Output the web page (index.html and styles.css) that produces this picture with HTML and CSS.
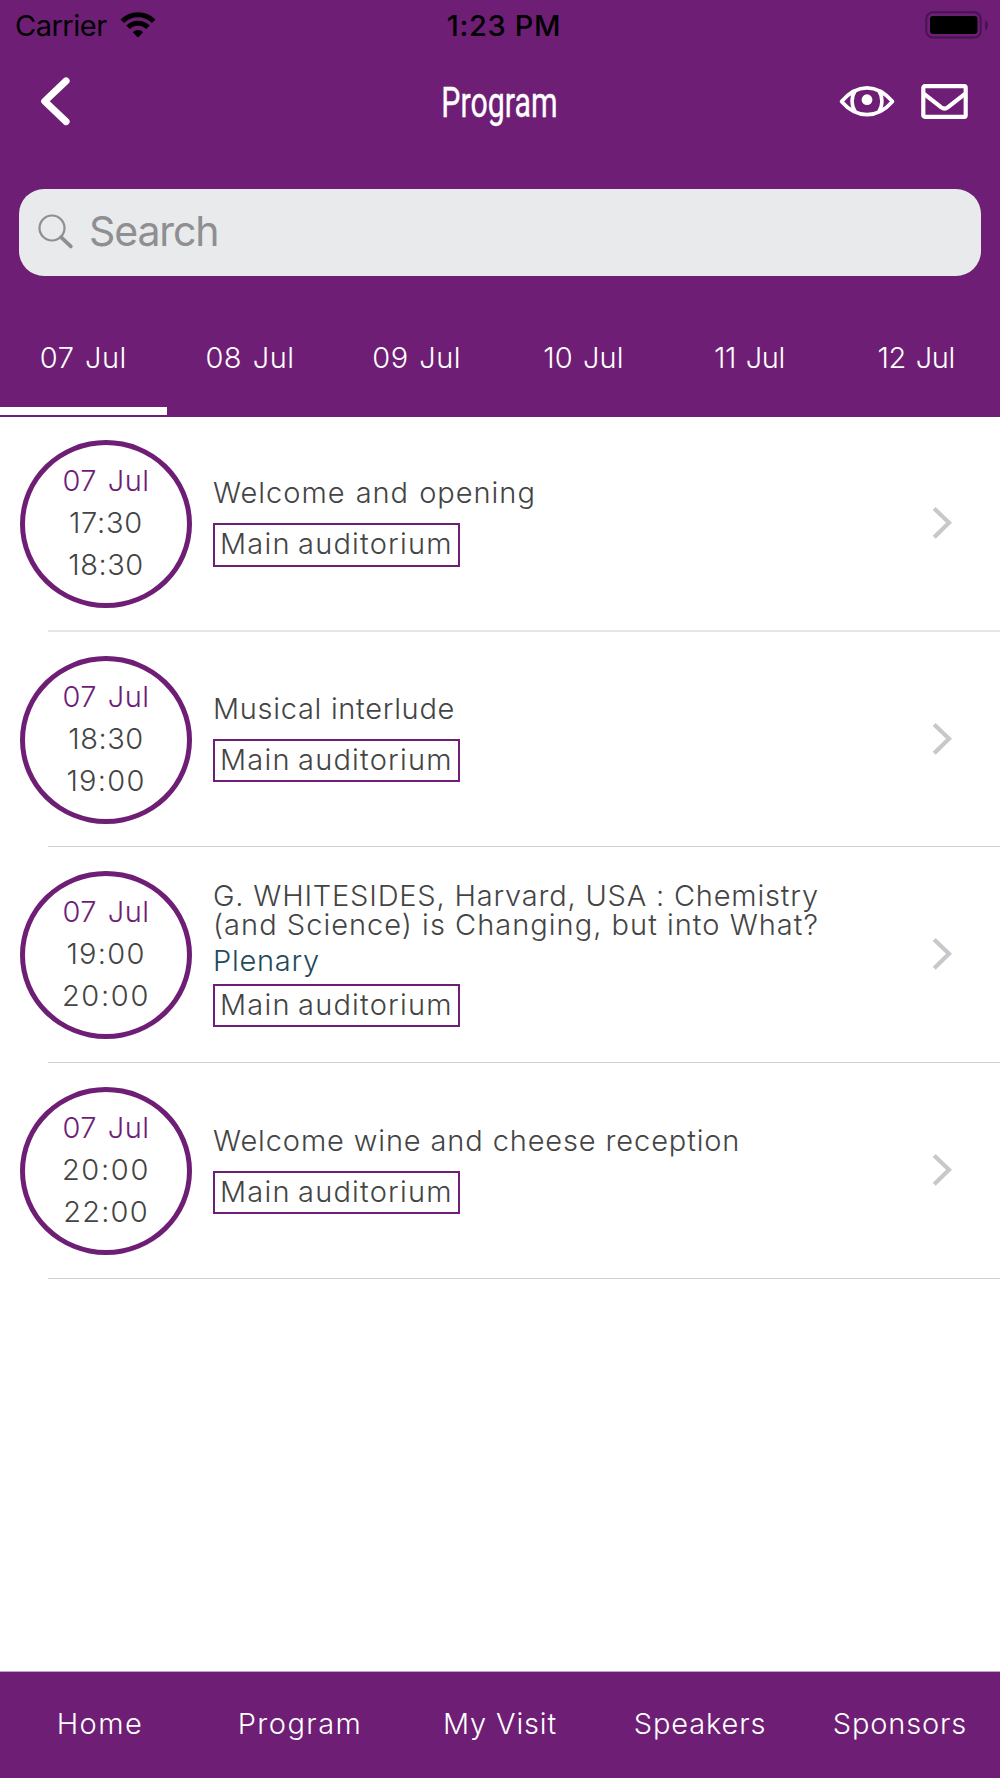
FILE: index.html
```html
<!DOCTYPE html>
<html lang="en">
<head>
<meta charset="utf-8">
<title>Program</title>
<link rel="stylesheet" href="styles.css">
</head>
<body>
<div class="app">
  <header class="header">
    <div class="status">
      <div class="status-left">
        <span class="carrier">Carrier</span>
        <svg class="wifi" width="36" height="26" viewBox="0 0 36 26">
          <g fill="none" stroke="#000" stroke-width="5">
            <path d="M2.3 9.3a22.2 22.2 0 0 1 31.4 0"/>
            <path d="M8 15.3a14.2 14.2 0 0 1 20 0"/>
          </g>
          <path d="M18 25.5l-5.2-5.3a7.4 7.4 0 0 1 10.4 0z"/>
        </svg>
      </div>
      <span class="clock">1:23 PM</span>
      <svg class="battery" width="64" height="28" viewBox="0 0 64 28">
        <rect x="1.3" y="1.3" width="54.4" height="25.2" rx="6.5" fill="none" stroke="#471350" stroke-width="2"/>
        <rect x="5" y="5" width="47.5" height="18" rx="3.2"/>
        <path d="M60 9.2c4 1.6 4 8.4 0 10z" fill="#471350"/>
      </svg>
    </div>
    <div class="navbar">
      <svg class="back" width="32" height="50" viewBox="0 0 32 50"><path d="M27.1 4.9L5.7 25.2 27.1 45.6" fill="none" stroke="#fff" stroke-width="7" stroke-linecap="round" stroke-linejoin="round"/></svg>
      <h1 class="title">Program</h1>
      <div class="actions">
        <svg width="58" height="32" viewBox="0 0 58 32" fill="none" stroke="#fff" stroke-width="3.6" stroke-linejoin="round">
          <path d="M3.5 16.5C10 9 19 2.9 29 2.9s19 6.1 25.5 13.6C48 24 39 29.6 29 29.6S10 24 3.5 16.5z"/>
          <path d="M17.3 5.5c-4.3 6.5-4.3 15 0 21.5M40.7 5.5c4.3 6.5 4.3 15 0 21.5"/>
          <circle cx="29" cy="14.7" r="5.4" fill="#fff" stroke="none"/>
        </svg>
        <svg width="47" height="35" viewBox="0 0 47 35" fill="none" stroke="#fff" stroke-width="4.2" stroke-linejoin="round">
          <rect x="2.3" y="2.2" width="42.4" height="30.6" rx="1.5"/>
          <path d="M3 9.8L20.3 23.4Q23.5 25.8 26.7 23.4L44 9.8"/>
        </svg>
      </div>
    </div>
    <div class="search">
      <svg width="36" height="36" viewBox="0 0 36 36" fill="none" stroke="#8e8e93">
        <circle cx="14" cy="14" r="12.5" stroke-width="2.2"/>
        <path d="M23 23.2L32.8 32.4" stroke-width="3.8" stroke-linecap="round"/>
      </svg>
      <span class="search-text">Search</span>
    </div>
    <nav class="tabs">
      <span class="tab tab-active">07 Jul</span>
      <span class="tab">08 Jul</span>
      <span class="tab">09 Jul</span>
      <span class="tab">10 Jul</span>
      <span class="tab">11 Jul</span>
      <span class="tab">12 Jul</span>
    </nav>
  </header>

  <main class="list">
    <article class="row">
      <div class="slot"><span class="date">07 Jul</span><span class="t1730">17:30</span><span class="t1830">18:30</span></div>
      <div class="info"><div class="name">Welcome and opening</div><div class="room">Main auditorium</div></div>
      <svg class="chevron" width="20" height="32" viewBox="0 0 20 32"><path d="M2.2 1.5L17 15.8 2.2 30.2"/></svg>
    </article>
    <article class="row">
      <div class="slot"><span class="date">07 Jul</span><span class="t1830">18:30</span><span class="t1900">19:00</span></div>
      <div class="info"><div class="name name-music">Musical interlude</div><div class="room">Main auditorium</div></div>
      <svg class="chevron" width="20" height="32" viewBox="0 0 20 32"><path d="M2.2 1.5L17 15.8 2.2 30.2"/></svg>
    </article>
    <article class="row">
      <div class="slot"><span class="date">07 Jul</span><span class="t1900">19:00</span><span class="t2000">20:00</span></div>
      <div class="info"><div class="name name-long"><span class="caps">G. WHITESIDES, Harvard, USA : Chemistry</span><br>(and Science) is Changing, but into What?</div><div class="kind">Plenary</div><div class="room">Main auditorium</div></div>
      <svg class="chevron" width="20" height="32" viewBox="0 0 20 32"><path d="M2.2 1.5L17 15.8 2.2 30.2"/></svg>
    </article>
    <article class="row">
      <div class="slot"><span class="date">07 Jul</span><span class="t2000">20:00</span><span class="t2200">22:00</span></div>
      <div class="info"><div class="name name-wine">Welcome wine and cheese reception</div><div class="room">Main auditorium</div></div>
      <svg class="chevron" width="20" height="32" viewBox="0 0 20 32"><path d="M2.2 1.5L17 15.8 2.2 30.2"/></svg>
    </article>
  </main>

  <footer class="bottom">
    <span>Home</span>
    <span>Program</span>
    <span>My Visit</span>
    <span>Speakers</span>
    <span>Sponsors</span>
  </footer>
</div>
</body>
</html>
```
FILE: styles.css
```css
* { box-sizing: border-box; }
body {
  margin: 0;
  background: #fff;
  color: #444;
  font: 300 29px/29px Inter, "Liberation Sans", sans-serif;
  white-space: nowrap;
}
svg { display: block; flex: none; }
.app { display: flex; flex-direction: column; width: 1000px; height: 1778px; overflow: hidden; }

.header { flex: none; height: 417px; background: #6e1e75; color: #fff; }
.status {
  display: grid;
  grid-template-columns: 1fr auto 1fr;
  align-items: center;
  height: 49px;
  padding: 0 11px 0 15px;
  color: #000;
}
.status-left { display: flex; align-items: center; gap: 13px; }
.carrier { padding-top: 2px; font-weight: 400; letter-spacing: -0.5px; }
.clock { padding: 2px 0 0 4px; font-weight: 500; letter-spacing: 0.7px; }
.battery { justify-self: end; }

.navbar {
  display: grid;
  grid-template-columns: 1fr auto 1fr;
  align-items: center;
  height: 104px;
  padding: 0 32px 0 39px;
}
.title {
  margin: 2px 0 0 -8px;
  font: 400 43px/50px Roboto, sans-serif;
  transform: scaleX(0.705);
  -webkit-text-stroke: 0.4px #fff;
}
.actions { display: flex; justify-content: flex-end; align-items: center; gap: 25px; }

.search {
  display: flex;
  align-items: center;
  gap: 15px;
  height: 87px;
  margin: 36px 19px 0;
  padding-left: 19px;
  border-radius: 25px;
  background: #e8eaeb;
  color: #8e8e93;
}
.search svg { margin-top: -2px; }
.search-text { padding-bottom: 2px; font-size: 41px; font-weight: 400; letter-spacing: -1.1px; }

.tabs { display: grid; grid-template-columns: repeat(6, 1fr); height: 140px; padding-bottom: 1px; }
.tab {
  padding-top: 67px;
  text-align: center;
  word-spacing: 2px;
  letter-spacing: 0.5px;
  border-bottom: 8px solid transparent;
}
.tab-active { border-color: #fff; }
.tab:nth-child(4) { letter-spacing: 0.1px; }
.tab:nth-child(n+5) { padding-right: 1px; letter-spacing: -0.4px; }

.list { flex: 1; display: grid; grid-template-rows: 215px 215px 216px 216px; align-content: start; }
.row {
  display: grid;
  grid-template-columns: 172px 700px 20px;
  column-gap: 20px;
  padding: 24px 0 0 20px;
  background: linear-gradient(#d0d0d2, #d0d0d2) 48px 100% / 100% 1px no-repeat;
}
.row:first-child { padding-top: 23px; background-image: linear-gradient(#e6e6e8, #e6e6e8); background-size: 100% 2px; }
.slot {
  display: flex;
  flex-direction: column;
  align-items: center;
  height: 168px;
  padding-top: 15px;
  border: 5px solid #6e1e75;
  border-radius: 50%;
  line-height: 42px;
}
.date { color: #6e1e75; word-spacing: 2px; letter-spacing: 0.5px; }
.t1730 { letter-spacing: 0.75px; }
.t1830 { letter-spacing: 0.55px; }
.t1900 { letter-spacing: 1.25px; }
.t2000 { letter-spacing: 1.7px; }
.t2200 { letter-spacing: 1.2px; }

.info { padding: 38px 0 0 1px; }
.name { letter-spacing: 0.98px; word-spacing: 1px; }
.name-music { letter-spacing: 0.7px; word-spacing: 0; }
.name-long { letter-spacing: 1.02px; word-spacing: 0; }
.caps { letter-spacing: 0.8px; }
.name-wine { letter-spacing: 0.87px; word-spacing: 0; }
.row:nth-child(3) .info { padding-top: 10px; }
.row:nth-child(4) .info { padding-top: 39px; }
.kind { margin-top: 7px; color: #1f4a5c; letter-spacing: 0.72px; }
.room {
  width: 247px;
  height: 43px;
  margin-top: 16px;
  padding-left: 5px;
  border: 2px solid #6e1e75;
  line-height: 38px;
  letter-spacing: 1.2px;
  word-spacing: -2px;
}
.row:first-child .room { height: 44px; }
.kind + .room { margin-top: 9px; }
.chevron { margin-top: 67px; fill: none; stroke: #c7c7cc; stroke-width: 4.2; }

.bottom {
  flex: none;
  display: grid;
  grid-template-columns: repeat(5, 200px);
  align-items: center;
  height: 107px;
  padding-bottom: 4px;
  border-top: 1px solid #c3a5c6;
  background: #6e1e75;
  color: #fff;
  text-align: center;
  letter-spacing: 0.85px;
}
.bottom span:nth-child(-n+2) { letter-spacing: 1.45px; }
```
